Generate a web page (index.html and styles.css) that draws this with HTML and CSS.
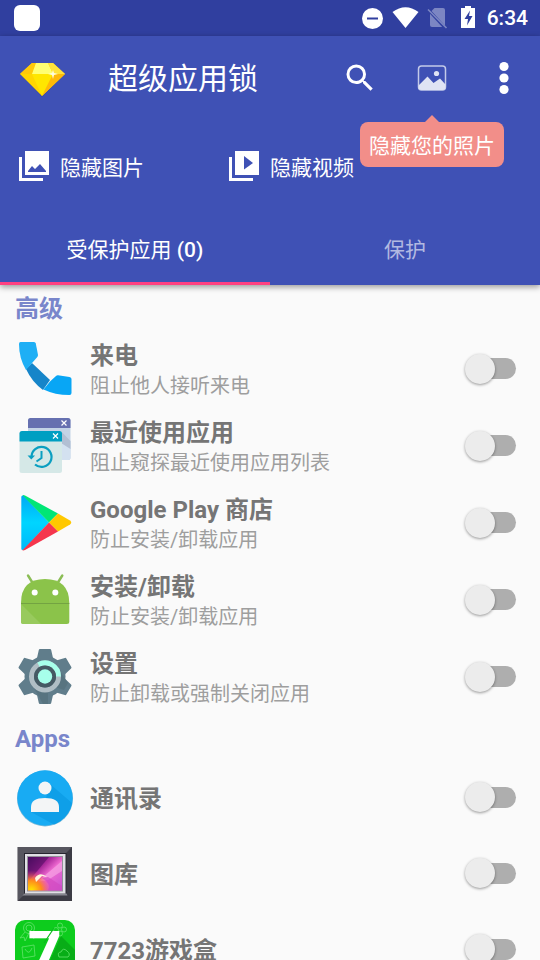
FILE: index.html
```html
<!DOCTYPE html>
<html lang="zh-CN">
<head>
<meta charset="utf-8">
<meta name="viewport" content="width=device-width, initial-scale=1">
<title>超级应用锁</title>
<link rel="stylesheet" href="styles.css">
</head>
<body>
<div class="screen">
  <div class="status">
    <span class="status-app"></span>
    <svg class="status-icons" width="114" height="36" viewBox="0 0 114 36" aria-hidden="true">
      <circle cx="10.500" cy="18.500" r="10.500" fill="#fff"/>
      <path d="M5 18.500h11" stroke="#303f9f" stroke-width="2"/>
      <path d="M30.500 12Q43.500 2.500 56.500 12L43.500 28Z" fill="#fff"/>
      <path d="M68 12.500L72.500 8H81q2 0 2 2v17H70q-2 0-2-2Z" fill="#7c86c3"/>
      <path d="M67 10.500L84 29" stroke="#303f9f" stroke-width="3"/>
      <path d="M66 9.500L84.500 28" stroke="#7c86c3" stroke-width="1.600"/>
      <path d="M99 8h4V6h6v2h4v20H99Z" fill="#fff"/>
      <path d="M108 10.500L102.500 19h3.500L105 25.500L110.500 16H107Z" fill="#303f9f"/>
    </svg>
    <span class="time">6:34</span>
  </div>

  <header class="header">
    <div class="toolbar">
      <svg class="gem" width="48" height="42" viewBox="0 0 48 42" aria-hidden="true">
        <path d="M12 8h21l11 10-22 22L1 18Z" fill="#2b3990" opacity=".4"/>
        <path d="M12 6h21l12 11-23 22L0 17Z" fill="#ffd600"/>
        <path d="M12 6L0 17h12l4-11Z" fill="#ffc90a"/>
        <path d="M16 6L12 17h21L28 6Z" fill="#ffff72"/>
        <path d="M28 6h5l12 11H33Z" fill="#ffe23a"/>
        <path d="M12 17h21L22 39Z" fill="#ffe600"/>
        <path d="M33 17h12L22 39Z" fill="#ffb908"/>
        <path d="M33 13l1 3 4 1-4 1-1 4-1-4-4-1 4-1Z" fill="#fffde0"/>
      </svg>
      <h1 class="title">超级应用锁</h1>
      <button class="tool" type="button" aria-label="搜索">
        <svg width="36" height="36" viewBox="0 0 24 24"><path fill="#fff" d="M15.500 14h-.79l-.28-.27A6.470 6.470 0 0 0 16 9.500 6.500 6.500 0 1 0 9.500 16c1.610 0 3.090-.59 4.230-1.570l.27.28v.79l5 4.990L20.490 19l-4.990-5zm-6 0C7.010 14 5 11.990 5 9.500S7.010 5 9.500 5 14 7.010 14 9.500 11.990 14 9.500 14z"/></svg>
      </button>
      <div class="tool-wrap">
        <button class="tool" type="button" aria-label="隐藏照片" aria-describedby="photo-tip">
          <svg width="30" height="28" viewBox="0 0 30 28">
            <rect x="1.500" y="2" width="27" height="24" rx="3" fill="none" stroke="#c3cae9" stroke-width="1.500"/>
            <path d="M2 21l8.500-8.500 6 6.500 6.500-4.500 5.500 6V23q0 3-3 3h-21q-3 0-3-3Z" fill="#dfe3f4"/>
            <circle cx="19.500" cy="9.500" r="2.600" fill="#dfe3f4"/>
          </svg>
        </button>
        <div class="tip" id="photo-tip" role="tooltip">隐藏您的照片</div>
      </div>
      <button class="tool" type="button" aria-label="更多选项">
        <svg width="10" height="34" viewBox="0 0 10 34" fill="#fff"><circle cx="5" cy="5.500" r="4.600"/><circle cx="5" cy="17" r="4.600"/><circle cx="5" cy="28.500" r="4.600"/></svg>
      </button>
    </div>

    <div class="quick">
      <button class="quick-item" type="button">
        <svg width="30" height="30" viewBox="0 0 30 30" aria-hidden="true"><path fill="#fff" d="M6 0h24v24H6ZM0 6h3v21h21v3H0Z"/><path fill="#3f51b5" d="M9 21v-1l4-5 3 3 5-5 6 7v1Z"/></svg>
        <span>隐藏图片</span>
      </button>
      <button class="quick-item" type="button">
        <svg width="30" height="30" viewBox="0 0 30 30" aria-hidden="true"><path fill="#fff" d="M6 0h24v24H6ZM0 6h3v21h21v3H0Z"/><path fill="#3f51b5" d="M15 5l9 7-9 6.500Z"/></svg>
        <span>隐藏视频</span>
      </button>
    </div>

    <nav class="tabs" role="tablist">
      <button class="tab tab-active" type="button" role="tab" aria-selected="true">受保护应用 <span class="count">(0)</span></button>
      <button class="tab" type="button" role="tab" aria-selected="false">保护</button>
    </nav>
  </header>

  <main class="list">
    <h2 class="section">高级</h2>
    <label class="row row-tall">
      <svg class="icon" viewBox="0 0 60 60" aria-hidden="true">
        <path d="M11 29l6-6 18 17-7 10Q17 42 11 29Z" fill="#1685c9"/>
        <path d="M5.500 2H19q1.500 0 1.800 1.500L23 15q0 1-.7 2L11 30Q4 18 4 4q0-2 1.500-2Z" fill="#1eaff5"/>
        <path d="M41 36q1-1 2-.8l11.500 1.800q2 .3 2 2V53q0 2-2 2Q40 55 28.500 49.500L35 41.500Z" fill="#08a6f5"/>
      </svg>
      <span class="text"><span class="name">来电</span><span class="desc">阻止他人接听来电</span></span>
      <input class="switch" type="checkbox" role="switch">
    </label>
    <label class="row row-tall">
      <svg class="icon" viewBox="0 0 60 60" aria-hidden="true">
        <rect x="13" y="1" width="42.500" height="42" rx="2.500" fill="#c3d3e6"/>
        <path d="M46 14l9.500 10v16.500q0 2.500-2.500 2.500h-7Z" fill="#d3e1f0"/>
        <path d="M46 14l9.500 10v8L46 26Z" fill="#b2bfd3"/>
        <path d="M13 11V3.500Q13 1 15.500 1H53q2.500 0 2.500 2.500V11Z" fill="#6670b0"/>
        <path d="M46.500 3.500l5 5m0-5l-5 5" stroke="#fff" stroke-width="1.200"/>
        <rect x="4.500" y="14" width="42.500" height="42" rx="2.500" fill="#d5e8e7"/>
        <path d="M4.500 24.500v-8q0-2.500 2.500-2.500h37.500q2.500 0 2.500 2.500v8Z" fill="#009fc2"/>
        <path d="M38 16.500l5 5m0-5l-5 5" stroke="#fff" stroke-width="1.200"/>
        <path d="M16.500 40a10 10 0 1 1 3.500 7.500" fill="none" stroke="#0b9fc1" stroke-width="2.200"/>
        <path d="M12.500 38.500h7.500l-3.700 4Z" fill="#0b9fc1"/>
        <path d="M26.500 34v7l-5 3.500" fill="none" stroke="#0b9fc1" stroke-width="2"/>
      </svg>
      <span class="text"><span class="name">最近使用应用</span><span class="desc">阻止窥探最近使用应用列表</span></span>
      <input class="switch" type="checkbox" role="switch">
    </label>
    <label class="row row-tall">
      <svg class="icon" viewBox="0 0 60 60" aria-hidden="true">
        <defs><linearGradient id="pb" x2="0" y2="1"><stop stop-color="#00a9f4"/><stop offset=".5" stop-color="#00d5ff"/><stop offset="1" stop-color="#00b8fb"/></linearGradient></defs>
        <path d="M6.300 3Q6.300 1 8.500 1.500L34 28.500 8.500 56q-2.200.5-2.200-1.500Z" fill="url(#pb)"/>
        <path d="M7.500 1.300q1-.5 2.500.3L43 19.500l-9 9Z" fill="#00e676"/>
        <path d="M43 19.500l12 7q2.500 2 0 4l-12 7-9-9Z" fill="#ffc800"/>
        <path d="M34 28.500l9 9L10 56q-1.500.8-2.500.3Z" fill="#f5364d"/>
      </svg>
      <span class="text"><span class="name">Google Play 商店</span><span class="desc">防止安装/卸载应用</span></span>
      <input class="switch" type="checkbox" role="switch">
    </label>
    <label class="row row-tall">
      <svg class="icon" viewBox="0 0 60 60" aria-hidden="true">
        <path d="M13 4.500l5 8M47.300 4.500l-5 8" stroke="#8bbd55" stroke-width="2.400" stroke-linecap="round"/>
        <path d="M6 32Q6 8 30 8t24.300 24v18.500q0 2.500-2.500 2.500H8.500Q6 53 6 50.500Z" fill="#8bc34a"/>
        <path d="M6 32h48.300v1H6Z" fill="#73a342"/>
        <path d="M6 33l20 20H8.500Q6 53 6 50.500Z" fill="#98ca5d"/>
        <circle cx="19.700" cy="21.500" r="3" fill="#fff"/><circle cx="40.300" cy="21.500" r="3" fill="#fff"/>
      </svg>
      <span class="text"><span class="name">安装/卸载</span><span class="desc">防止安装/卸载应用</span></span>
      <input class="switch" type="checkbox" role="switch">
    </label>
    <label class="row row-tall">
      <svg class="icon" viewBox="0 0 60 60" aria-hidden="true">
        <g fill="#607d8b">
          <circle cx="30" cy="28.500" r="20.500"/>
          <path id="teeth" d="M25 1h10q1 0 1.200 1L38 10v37l-1.800 8q-.2 1-1.200 1H25q-1 0-1.200-1L22 47V10l1.800-8q.2-1 1.200-1Z"/>
          <use href="#teeth" transform="rotate(60 30 28.500)"/>
          <use href="#teeth" transform="rotate(120 30 28.500)"/>
        </g>
        <path d="M19 40L41 17l12 18-4 7-9-3-7 6v11h-5Z" fill="#546e7a" opacity=".6"/>
        <circle cx="30" cy="28.500" r="13.500" fill="none" stroke="#b0bec5" stroke-width="5"/>
        <path d="M23.500 16.700A13.500 13.500 0 0 1 43.500 28.500" fill="none" stroke="#a7ffeb" stroke-width="5"/>
        <circle cx="30" cy="28.500" r="11" fill="#455a64"/>
        <circle cx="30" cy="28.500" r="7.200" fill="#a7ffeb"/>
      </svg>
      <span class="text"><span class="name">设置</span><span class="desc">防止卸载或强制关闭应用</span></span>
      <input class="switch" type="checkbox" role="switch">
    </label>

    <h2 class="section section-latin">Apps</h2>
    <label class="row">
      <svg class="icon" viewBox="0 0 60 60" aria-hidden="true">
        <circle cx="30" cy="30.500" r="28" fill="#0b7db5" opacity=".5"/>
        <circle cx="30" cy="30" r="27.700" fill="#18abf3"/>
        <path d="M35 16l22 19q-3 15-18 21.500L16 44l15-14Z" fill="#0e9fe8"/>
        <circle cx="30" cy="20" r="6.500" fill="#f3f5f6"/>
        <path d="M16 44v-5q0-9 14-9t14 9v5Z" fill="#f3f5f6"/>
      </svg>
      <span class="text"><span class="name">通讯录</span></span>
      <input class="switch" type="checkbox" role="switch">
    </label>
    <label class="row">
      <svg class="icon" viewBox="0 0 60 60" aria-hidden="true">
        <defs>
          <linearGradient id="gp" x2="1" y2="1"><stop stop-color="#44125f"/><stop offset=".35" stop-color="#ab2a9c"/><stop offset=".55" stop-color="#f06bd2"/><stop offset="1" stop-color="#c653cf"/></linearGradient>
          <radialGradient id="gy" cx=".1" cy="1" r=".6"><stop stop-color="#ffe900"/><stop offset=".5" stop-color="#ff8a1c"/><stop offset="1" stop-color="#f4438a" stop-opacity="0"/></radialGradient>
        </defs>
        <rect x="2.700" y="3" width="54.300" height="54" fill="#3c3b44"/>
        <path d="M2.700 3H57l-6 6H9L9 51l-6.300 6Z" fill="#57565f"/>
        <path d="M9 9h42.500v41H9Z" fill="#26242e"/>
        <path d="M7.500 51.500h45l-1-2h-42Z" fill="#888790"/>
        <rect x="10" y="10" width="40.500" height="39.500" fill="#e0dfe4"/>
        <rect x="12" y="12" width="36" height="35.500" fill="#93909a"/>
        <rect x="13" y="13" width="34" height="33.500" fill="url(#gp)"/>
        <path d="M13 13h21L13 38Z" fill="#4b075d" opacity=".55"/>
        <path d="M47 17L22 38l11-2 14-9Z" fill="#f6a4e4" opacity=".7"/>
        <rect x="13" y="13" width="34" height="33.500" fill="url(#gy)"/>
        <path d="M20 34q5-7 12-1l-5-1-6 6Z" fill="#fff4df"/>
        <path d="M33 33l14 9v4.500H33Q37 40 27 34Z" fill="#d34ac1" opacity=".7"/>
      </svg>
      <span class="text"><span class="name">图库</span></span>
      <input class="switch" type="checkbox" role="switch">
    </label>
    <label class="row">
      <svg class="icon" viewBox="0 0 60 60" aria-hidden="true">
        <rect width="60" height="60" rx="10" fill="#0dcc1d"/>
        <path d="M46 16l14 14v30H26Z" fill="#08ad17"/>
        <g fill="none" stroke="#65e36c" stroke-width=".8">
          <circle cx="14" cy="8" r="5.500"/><circle cx="14" cy="8" r="3"/><path d="M10 12l-5 6 4-1 1 4 4-8M16 13l3 6"/>
          <circle cx="45" cy="5.500" r="2.500"/><circle cx="49" cy="9.500" r="2.500"/><circle cx="41" cy="10" r="2.500"/><circle cx="45" cy="13.500" r="2.500"/>
          <path d="M7 27l12-2 1 11-12 2ZM10 29q4 7 7-1M44 37q-2-5 2-5 2-5 6-1 4 3 1 6Z"/>
        </g>
        <text class="mark" x="13" y="52">7</text>
        <path d="M29 23l10-15" stroke="#0dbb1d" stroke-width="1.200"/>
      </svg>
      <span class="text"><span class="name">7723游戏盒</span></span>
      <input class="switch" type="checkbox" role="switch">
    </label>
  </main>
</div>
</body>
</html>
```

FILE: styles.css
```css
* {
  box-sizing: border-box;
}

body {
  margin: 0;
  background: #fafafa;
  font-family: Roboto, "Noto Sans CJK SC", sans-serif;
}

button {
  margin: 0;
  padding: 0;
  border: 0;
  background: none;
  color: inherit;
  font: inherit;
}

svg {
  display: block;
  flex: none;
}

.screen {
  display: flex;
  flex-direction: column;
  height: 100vh;
  overflow: hidden;
}

.status {
  display: flex;
  align-items: center;
  gap: 11px;
  flex: none;
  height: 36px;
  padding: 0 12px 0 14px;
  background: #303f9f;
  color: #fff;
}

.status-app {
  width: 26px;
  height: 26px;
  margin-right: auto;
  border-radius: 6px;
  background: #fff;
}

.time {
  font-size: 21px;
  font-weight: 500;
}

.header {
  position: relative;
  z-index: 1;
  flex: none;
  background: #3f51b5;
  color: #fff;
  box-shadow: 0 2px 6px rgba(0, 0, 0, 0.4);
}

.toolbar {
  display: flex;
  align-items: center;
  height: 84px;
  padding-left: 20px;
}

.title {
  flex: 1;
  margin: 0 0 0 40px;
  padding-top: 2px;
  font-size: 30px;
  font-weight: 400;
  line-height: 40px;
}

.tool {
  display: flex;
  align-items: center;
  justify-content: center;
  width: 72px;
  height: 72px;
}

.tool-wrap {
  position: relative;
}

.tip {
  position: absolute;
  top: 80px;
  left: 50%;
  width: 144px;
  margin-left: -72px;
  padding-top: 3px;
  border-radius: 8px;
  background: #f28e89;
  font-size: 21px;
  line-height: 42px;
  text-align: center;
  white-space: nowrap;
}

.tip::before {
  content: "";
  position: absolute;
  bottom: 100%;
  left: 50%;
  margin-left: -7px;
  border: 7px solid transparent;
  border-top: 0;
  border-bottom-color: #f28e89;
}

.quick {
  display: flex;
  height: 91px;
  padding-left: 19px;
}

.quick-item {
  display: flex;
  align-items: center;
  gap: 11px;
  min-width: 210px;
  font-size: 21px;
}

.tabs {
  display: grid;
  grid-template-columns: 1fr 1fr;
}

.tab {
  height: 74px;
  border: solid transparent;
  border-width: 3px 0;
  color: #b2b9e1;
  font-size: 21px;
}

.count {
  font-weight: 500;
}

.tab-active {
  border-bottom-color: #ff4081;
  color: #fff;
}

.list {
  flex: 1;
  min-height: 0;
  overflow: hidden;
}

.section {
  margin: 0;
  padding: 2px 0 0 15px;
  color: #7986cb;
  font-size: 24px;
  font-weight: 700;
  line-height: 44px;
}

.section-latin {
  line-height: 42px;
}

.row {
  display: flex;
  align-items: center;
  min-height: 76px;
  padding: 7px 24px 7px 15px;
}

.row-tall {
  min-height: 77px;
}

.icon {
  width: 60px;
  height: 60px;
}

.mark {
  fill: #fff;
  font-size: 58px;
  font-weight: 900;
}

.text {
  flex: 1;
  margin-left: 15px;
  padding-top: 2px;
}

.name,
.desc {
  display: block;
  line-height: 30px;
}

.name {
  color: #757575;
  font-size: 24px;
  font-weight: 700;
}

.desc {
  color: #9e9e9e;
  font-size: 20px;
}

.switch {
  appearance: none;
  display: grid;
  align-items: center;
  width: 51px;
  height: 30px;
  margin: 0 0 2px;
}

.switch::before,
.switch::after {
  content: "";
  grid-area: 1 / 1;
}

.switch::before {
  height: 21px;
  margin-left: 6px;
  border-radius: 11px;
  background: #aeaeae;
}

.switch::after {
  width: 30px;
  height: 30px;
  border-radius: 50%;
  background: #ececec;
  box-shadow: 0 1px 3px rgba(0, 0, 0, 0.4);
}
```
